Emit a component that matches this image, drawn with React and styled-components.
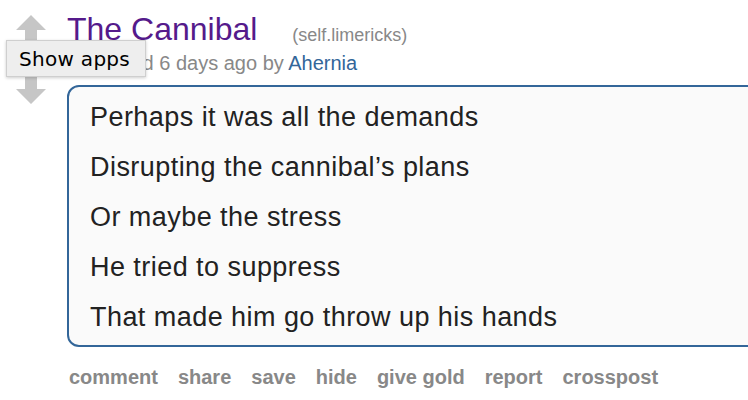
import React from 'react';
import styled, { createGlobalStyle } from 'styled-components';

const GlobalStyle = createGlobalStyle`
    html, body {
        margin: 0;
        padding: 0;
        background: #ffffff;
        overflow: hidden;
    }
    body {
        font-family: "Liberation Sans", Arial, sans-serif;
    }
`

const lines = [
    'Perhaps it was all the demands',
    'Disrupting the cannibal\u2019s plans',
    'Or maybe the stress',
    'He tried to suppress',
    'That made him go throw up his hands',
]

const buttons = ['comment', 'share', 'save', 'hide', 'give gold', 'report', 'crosspost']

function Arrow({ down }) {
    return (
        <ArrowSvg viewBox="0 0 30 28" $down={down}>
            <polygon points="15,0 30,15 21,15 21,28 9,28 9,15 0,15" fill="#c6c6c6" />
        </ArrowSvg>
    )
}

function App() {
    return (
        <>
            <GlobalStyle />
            <Page>
                <Midcol>
                    <Arrow />
                    <Arrow down />
                </Midcol>

                <Entry>
                    <Title>
                        <TitleLink>The Cannibal</TitleLink>
                        <Domain>(self.limericks)</Domain>
                    </Title>
                    <Tagline>
                        submitted 6 days ago by <Author>Ahernia</Author>
                    </Tagline>

                    <Usertext>
                        {lines.map((line) => (
                            <Line key={line}>{line}</Line>
                        ))}
                    </Usertext>

                    <Buttons>
                        {buttons.map((b) => (
                            <Button key={b}>{b}</Button>
                        ))}
                    </Buttons>
                </Entry>

                <Tooltip>Show apps</Tooltip>
            </Page>
        </>
    )
}

export default App


const Page = styled.div`
    position: relative;
    display: flex;
    width: 748px;
    height: 400px;
    padding-left: 16px;
    box-sizing: border-box;
    overflow: hidden;
`

const Midcol = styled.div`
    display: flex;
    flex-direction: column;
    gap: 33px;
    width: 30px;
    padding-top: 15px;
    flex-shrink: 0;
`

const ArrowSvg = styled.svg`
    display: block;
    width: 30px;
    height: 28px;
    transform: ${(p) => (p.$down ? 'rotate(180deg)' : 'none')};
`

const Entry = styled.div`
    margin-left: 21px;
    padding-top: 11px;
    flex-shrink: 0;
`

const Title = styled.div`
    height: 36px;
    font-size: 32px;
    line-height: 36px;
    white-space: nowrap;
`

const TitleLink = styled.span`
    color: #551a8b;
`

const Domain = styled.span`
    margin-left: 35px;
    font-size: 18px;
    line-height: 18px;
    position: relative;
    top: 1px;
    color: #888888;
`

const Tagline = styled.div`
    margin-top: 4px;
    font-size: 20px;
    line-height: 24px;
    color: #888888;
`

const Author = styled.span`
    color: #336699;
`

const Usertext = styled.div`
    width: 720px;
    margin-top: 10px;
    padding: 5px 21px 3px;
    border: 2px solid #336699;
    border-radius: 12px;
    background: #fafafa;
    box-sizing: border-box;
`

const Line = styled.p`
    margin: 0;
    font-size: 27px;
    letter-spacing: 0.45px;
    line-height: 50px;
    color: #222222;
`

const Buttons = styled.ul`
    display: flex;
    gap: 20px;
    margin: 18px 0 0;
    padding: 0 0 0 2px;
    list-style: none;
`

const Button = styled.li`
    font-size: 20px;
    font-weight: bold;
    line-height: 24px;
    color: #888888;
`

const Tooltip = styled.div`
    position: absolute;
    left: 6px;
    top: 40px;
    width: 140px;
    height: 37px;
    box-sizing: border-box;
    padding-left: 12px;
    display: flex;
    align-items: center;
    background: #eeeeee;
    border: 1px solid #cfcfcf;
    box-shadow: 0 1px 3px rgba(0, 0, 0, 0.2);
    font-family: "DejaVu Sans", sans-serif;
    font-size: 20px;
    letter-spacing: 0.3px;
    color: #000000;
`
